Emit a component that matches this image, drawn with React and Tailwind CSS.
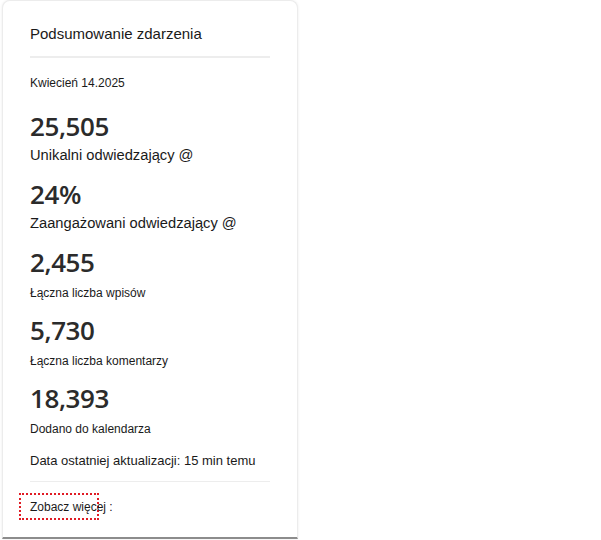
export default function App() {
  const stats = [
    { value: "25,505", label: "Unikalni odwiedzający @", big: true },
    { value: "24%", label: "Zaangażowani odwiedzający @", big: true },
    { value: "2,455", label: "Łączna liczba wpisów" },
    { value: "5,730", label: "Łączna liczba komentarzy" },
    { value: "18,393", label: "Dodano do kalendarza" },
  ];

  return (
    <div className="w-[601px] h-[540px] bg-white" style={{ fontFamily: '"Liberation Sans", Arial, sans-serif' }}>
      <div className="ml-[2px] w-[296px] h-[539px] rounded-t-[8px] border border-[#ececec] border-b-2 border-b-[#8c8c8c] bg-white shadow-[0_0_3px_rgba(0,0,0,0.08)] flex flex-col">
        <div className="px-[27px]">
          <div className="pt-[24px] text-[15px] leading-[18px] text-[#1a1a1a]">Podsumowanie zdarzenia</div>
          <div className="mt-[13px] h-[2px] bg-[#ededed]" />
          <div className="mt-[18px] text-[12px] leading-[14px] text-[#1a1a1a]">Kwiecień 14.2025</div>

          <div className="mt-[21px] flex flex-col">
            {stats.map((s) => (
              <div key={s.value} className="h-[68px]">
                <div
                  className="text-[26px] leading-[30px] font-semibold text-[#2b2b2b] tracking-[-0.4px]"
                  style={{ fontFamily: '"Open Sans", sans-serif' }}
                >
                  {s.value}
                </div>
                <div
                  className={
                    s.big
                      ? "mt-[5px] text-[14.7px] leading-[18px] text-[#1a1a1a]"
                      : "mt-[9px] text-[12px] leading-[14px] text-[#1a1a1a]"
                  }
                >
                  {s.label}
                </div>
              </div>
            ))}
          </div>

          <div className="mt-[2px] text-[13px] leading-[16px] text-[#1a1a1a]">
            Data ostatniej aktualizacji: 15 min temu
          </div>
          <div className="mt-[12px] h-[1px] bg-[#ededed]" />
        </div>

        <div className="mt-[11px] ml-[16px] w-[80px] h-[27px] border-2 border-dotted border-[#e01b24] flex items-center pl-[9px] text-[12px] text-[#1a1a1a] whitespace-nowrap">
          Zobacz więcej :
        </div>
      </div>
    </div>
  );
}
